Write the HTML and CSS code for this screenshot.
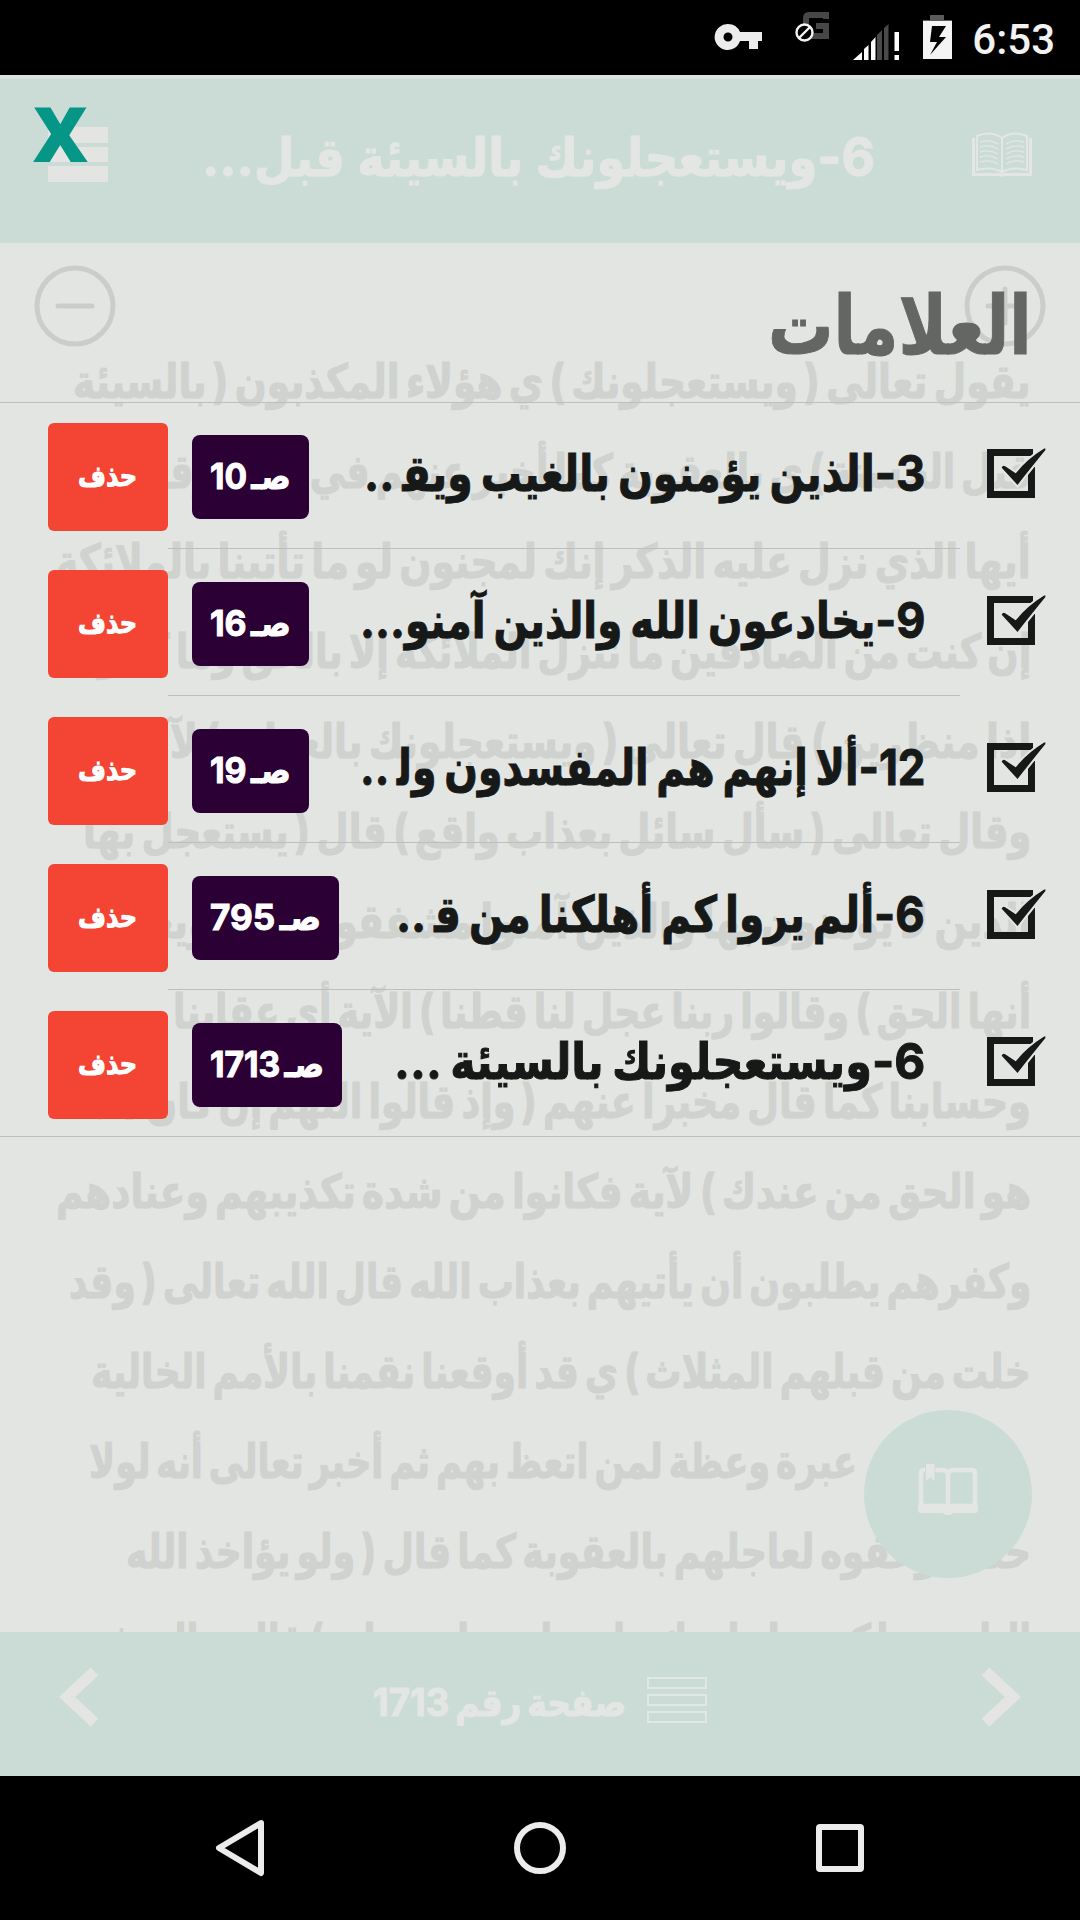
FILE: index.html
```html
<!DOCTYPE html>
<html lang="ar" dir="rtl">
<head>
<meta charset="utf-8">
<title>العلامات</title>
<link rel="stylesheet" href="styles.css">
</head>
<body>
<div class="screen">
  <div class="status" dir="ltr">
    <svg width="380" height="75" viewBox="700 0 380 75">
      <path fill="#ececec" fill-rule="evenodd" d="M728 24a13 13 0 1 0 12 17h9v8h9v-8h4v-9h-22a13 13 0 0 0-12-8zm0 8.500a4.500 4.500 0 1 1 0 9 4.500 4.500 0 0 1 0-9z"/>
      <path fill="none" stroke="#474747" stroke-width="6" d="M826 19v-4h-17q-3 0-3 3v15q0 3 3 3h17v-10h-10"/>
      <circle cx="804.500" cy="32.500" r="8" fill="#000" stroke="#f4f4f4" stroke-width="2.400"/>
      <path stroke="#f4f4f4" stroke-width="2.400" d="M799 38l11-11"/>
      <path fill="#fff" d="M853 60l9-8v8zM864 60V49l4.500-4v15zM871 60V42l4.500-5v23z"/>
      <path fill="#4a4a4a" d="M877 60V35l5-5v30zM884 60V28l4.500-4v36z"/>
      <path fill="#fff" d="M894.500 32h4.500v19h-4.500zM894.500 55h4.500v5h-4.500z"/>
      <path fill="#5a5a5a" d="M930 15h14v5h8v1h-29v-1h7z"/>
      <path fill="#f4f4f4" fill-rule="evenodd" d="M923 21h29v38h-29zM932 26l-2 16h7l-7 13 16-18h-7l7-11z"/>
    </svg>
    <span class="clock">6:53</span>
  </div>

  <main class="app">
    <section class="reader">
      <header class="bar top">
        <svg class="book" width="60" height="45" viewBox="0 0 60 45" fill="none" stroke="#e4e6e4">
          <path stroke-width="2" d="M5 4Q19-2 30 6Q41-2 55 4V38Q41 34 30 40Q19 34 5 38zM30 6v34"/>
          <path stroke-width="3" d="M1.500 6V42.500H28q2 1.500 4 0H58.500V6"/>
          <path stroke-width="1.400" d="M8 10q10-3 18 2M8 15q10-3 18 2M8 20q10-3 18 2M8 25q10-3 18 2M8 30q10-3 18 2M52 10q-10-3-18 2M52 15q-10-3-18 2M52 20q-10-3-18 2M52 25q-10-3-18 2M52 30q-10-3-18 2"/>
        </svg>
        <h1 class="chapter"><span class="fit" data-width="673">6-ويستعجلونك بالسيئة قبل...</span></h1>
        <div class="menu"><i></i><i></i><i></i></div>
      </header>
      <article class="page">
        <div class="sizes">
          <svg width="82" height="82" viewBox="0 0 82 82"><circle cx="41" cy="41" r="38"/><path d="M24 41h34M41 24v34"/></svg>
          <svg width="82" height="82" viewBox="0 0 82 82"><circle cx="41" cy="41" r="38"/><path d="M24 41h34"/></svg>
        </div>
        <p><span class="fit" data-width="958">يقول تعالى ( ويستعجلونك ) ي هؤلاء المكذبون ( بالسيئة</span></p>
        <p><span class="fit" data-width="956">قبل الحسنة ) ي بالعقوبة كما أخبر عنهم في قوله وقالوا يا</span></p>
        <p><span class="fit" data-width="975">أيها الذي نزل عليه الذكر إنك لمجنون لو ما تأتينا بالملائكة</span></p>
        <p><span class="fit" data-width="946">إن كنت من الصادقين ما ننزل الملائكة إلا بالحق وما كانوا</span></p>
        <p><span class="fit" data-width="940">إذا منظرين ) قال تعالى ( ويستعجلونك بالعذاب ) لآيتين</span></p>
        <p><span class="fit" data-width="948">وقال تعالى ( سأل سائل بعذاب واقع ) قال ( يستعجل بها</span></p>
        <p><span class="fit" data-width="975">الذين لا يؤمنون بها والذين آمنوا مشفقون منها ويعلمون</span></p>
        <p><span class="fit" data-width="858">أنها الحق ) وقالوا ربنا عجل لنا قطنا ) الآية أي عقابنا</span></p>
        <p><span class="fit" data-width="950">وحسابنا كما قال مخبرا عنهم ( وإذ قالوا اللهم إن كان هذا</span></p>
        <p><span class="fit" data-width="975">هو الحق من عندك ) لآية فكانوا من شدة تكذيبهم وعنادهم</span></p>
        <p><span class="fit" data-width="962">وكفرهم يطلبون أن يأتيهم بعذاب الله قال الله تعالى ( وقد</span></p>
        <p><span class="fit" data-width="940">خلت من قبلهم المثلاث ) ي قد أوقعنا نقمنا بالأمم الخالية</span></p>
        <p><span class="fit" data-width="160">وجعلناهم</span><span class="fit gap" data-width="768">عبرة وعظة لمن اتعظ بهم ثم أخبر تعالى أنه لولا</span></p>
        <p><span class="fit" data-width="905">حلمه وعفوه لعاجلهم بالعقوبة كما قال ( ولو يؤاخذ الله</span></p>
        <p><span class="fit" data-width="956">الناس بما كسبوا ما ترك على ظهرها من دابة ) قال تعالى في</span></p>
        <div class="fab">
          <svg width="60" height="52" viewBox="0 0 60 52" fill="none" stroke="#e4e6e4">
            <path stroke-width="4.500" d="M7 6H24Q30 6 30 11Q30 6 36 6H53Q57 6 57 9V42H3V9Q3 6 7 6zM30 11v31"/>
            <path fill="#e4e6e4" stroke="none" d="M0 41h60v5q0 3-3 3H35q-1 2-5 2t-5-2H3q-3 0-3-3z"/>
            <path fill="#e4e6e4" stroke="#cbdcd7" stroke-width="1" d="M7.500-.5h9.500V18l-4.700-4-4.800 4z"/>
          </svg>
        </div>
      </article>
      <footer class="bar bottom">
        <svg width="40" height="60" viewBox="0 0 40 60"><path class="chev" d="M4.500 4.500L32 30 4.500 55.500"/></svg>
        <div class="pageno">
          <svg width="60" height="46" viewBox="0 0 60 46" fill="none" stroke="#dfe8e4" stroke-width="2"><path d="M1 1h58v10H1zM1 18h58v10H1zM1 35h58v10H1z"/></svg>
          <span class="fit" data-width="253">صفحة رقم 1713</span>
        </div>
        <svg width="40" height="60" viewBox="0 0 40 60"><path class="chev" d="M35.500 4.500L8 30l27.500 25.500"/></svg>
      </footer>
    </section>

    <section class="panel">
      <div class="close">X</div>
      <h2><span class="fit" data-width="264">العلامات</span></h2>
      <ul class="marks">
        <li>
          <svg class="check" width="60" height="52" viewBox="0 0 60 52"><use href="#tick"/></svg>
          <div class="name"><span class="fit" data-width="561">3-الذين يؤمنون بالغيب ويق&zwj; ..</span></div>
          <div class="num w2"><span class="fit" data-width="81">صـ 10</span></div>
          <div class="del"><span class="fit" data-width="59">حذف</span></div>
        </li>
        <li>
          <svg class="check" width="60" height="52" viewBox="0 0 60 52"><use href="#tick"/></svg>
          <div class="name"><span class="fit" data-width="565">9-يخادعون الله والذين آمنو...</span></div>
          <div class="num w2"><span class="fit" data-width="81">صـ 16</span></div>
          <div class="del"><span class="fit" data-width="59">حذف</span></div>
        </li>
        <li>
          <svg class="check" width="60" height="52" viewBox="0 0 60 52"><use href="#tick"/></svg>
          <div class="name"><span class="fit" data-width="565">12-ألا إنهم هم المفسدون ول&zwj; ..</span></div>
          <div class="num w2"><span class="fit" data-width="81">صـ 19</span></div>
          <div class="del"><span class="fit" data-width="59">حذف</span></div>
        </li>
        <li>
          <svg class="check" width="60" height="52" viewBox="0 0 60 52"><use href="#tick"/></svg>
          <div class="name"><span class="fit" data-width="529">6-ألم يروا كم أهلكنا من ق&zwj; ..</span></div>
          <div class="num w3"><span class="fit" data-width="111">صـ 795</span></div>
          <div class="del"><span class="fit" data-width="59">حذف</span></div>
        </li>
        <li>
          <svg class="check" width="60" height="52" viewBox="0 0 60 52"><use href="#tick"/></svg>
          <div class="name"><span class="fit" data-width="531">6-ويستعجلونك بالسيئة ...</span></div>
          <div class="num w4"><span class="fit" data-width="114">صـ 1713</span></div>
          <div class="del"><span class="fit" data-width="59">حذف</span></div>
        </li>
      </ul>
    </section>
  </main>

  <nav class="keys" dir="ltr">
    <svg width="52" height="60" viewBox="0 0 52 60"><path d="M47 5L5 30l42 25z"/></svg>
    <svg width="52" height="60" viewBox="0 0 52 60"><circle cx="26" cy="30" r="23"/></svg>
    <svg width="52" height="60" viewBox="0 0 52 60"><rect x="5" y="9" width="42" height="42" rx="1"/></svg>
  </nav>
</div>
<svg class="defs" width="0" height="0">
  <g id="tick">
    <path fill="none" stroke="#171918" stroke-width="7" d="M46 5.500H3.500V47.500H44.500V20"/>
    <path fill="#171918" stroke="#e3e6e3" stroke-width="2" d="M13.500 21q1.500-5 6-2l9 6Q40 11 57 0.500q3.500-.5 2 3.500Q46 20 30.500 39.500z"/>
  </g>
</svg>
<script src="fit.js"></script>
</body>
</html>
```
FILE: styles.css
```css
* { box-sizing: border-box; margin: 0; padding: 0; }
body {
  width: 1080px;
  height: 1920px;
  overflow: hidden;
  background: #000;
  font-family: Inter, "DejaVu Sans Condensed", "DejaVu Sans", sans-serif;
  font-weight: 700;
}
svg { display: block; flex: none; }
.defs { position: absolute; }
.screen { display: flex; flex-direction: column; height: 1920px; overflow: hidden; }

.fit { display: inline-block; white-space: nowrap; text-align: right; vertical-align: top; }
.fit > span { display: inline-block; transform-origin: right center; -webkit-text-stroke: 1px currentColor; }

.status { height: 75px; position: relative; display: flex; justify-content: flex-end; background: #000; }
.clock {
  position: absolute;
  right: 25px;
  top: 15px;
  font: 500 42px/50px Roboto, sans-serif;
  color: #f2f2f2;
}

.app { position: relative; height: 1701px; overflow: hidden; background: #e2e5e2; }
.reader { display: flex; flex-direction: column; height: 100%; }
.bar { background: #cbdcd7; color: #e4e6e4; display: flex; flex: none; }
.top {
  height: 168px;
  border-top: 4px solid #d7e3df;
  padding: 0 48px;
  align-items: flex-start;
}
.book { margin-top: 53px; }
.chapter {
  margin: 42px 97px 0 auto;
  font-size: 53px;
  line-height: 72px;
  width: 673px;
  height: 84px;
}
.menu { display: flex; flex-direction: column; gap: 4px; width: 60px; margin: 48px auto 0 0; }
.menu i { height: 15.500px; background: #e4e4e2; }

.page {
  position: relative;
  height: 1389px;
  overflow: hidden;
  padding: 93px 49px 0;
  color: #cfd2cf;
  font-size: 47px;
  line-height: 90px;
  word-spacing: -4px;
}
.page p { height: 90px; white-space: nowrap; }
.gap { margin-right: 14px; }
.sizes {
  position: absolute;
  left: 34px;
  right: 34px;
  top: 22px;
  display: flex;
  justify-content: space-between;
  fill: none;
  stroke: #cbcdcb;
  stroke-width: 5;
  stroke-linecap: round;
}
.fab {
  position: absolute;
  left: 864px;
  top: 1167px;
  width: 168px;
  height: 168px;
  border-radius: 50%;
  background: #cbdcd7;
  padding: 54px;
}

.bottom { height: 144px; padding: 35px 59px 0; justify-content: space-between; }
.chev { fill: none; stroke: #e4e5e3; stroke-width: 11; }
.pageno { display: flex; gap: 20px; font-size: 38px; line-height: 60px; word-spacing: -3px; }
.pageno svg { margin-top: 10px; }
.pageno .fit { margin-top: 5px; }

.panel { position: absolute; inset: 0; }
.close {
  position: absolute;
  left: 31px;
  top: 31px;
  width: 59px;
  font: 800 76px/54px "Open Sans", sans-serif;
  text-align: center;
  color: #059687;
  direction: ltr;
}
.panel h2 {
  height: 328px;
  padding: 200px 48px 0;
  font-size: 81px;
  line-height: 100px;
  color: #646664;
  border-bottom: 1px solid #bdbfbd;
}
.marks { list-style: none; margin-top: -1px; }
.marks li {
  display: flex;
  height: 147px;
  padding: 21px 33px 0 48px;
  background: linear-gradient(#bdbfbd, #bdbfbd) 168px 100% / 792px 1px no-repeat;
}
.marks li:last-child { background-size: 1080px 1px; background-position: 0 100%; }
.check { margin-top: 24px; }
.name {
  margin-right: 62px;
  margin-top: 15px;
  font-size: 50px;
  line-height: 70px;
  word-spacing: -3px;
  color: #171918;
}
.num, .del { color: #fff; display: flex; justify-content: center; flex: none; }
.num {
  height: 84px;
  margin: 12px auto 0 24px;
  border-radius: 8px;
  background: #2b0034;
  font-size: 36px;
  line-height: 82px;
  word-spacing: -4px;
}
.w2 { width: 117px; }
.w3 { width: 147px; }
.w4 { width: 150px; }
.del {
  width: 120px;
  height: 108px;
  border-radius: 6px;
  background: #f44434;
  font-size: 29px;
  line-height: 105px;
}

.keys {
  height: 144px;
  display: flex;
  justify-content: space-between;
  padding: 42px 214px 0;
  background: #000;
  fill: none;
  stroke: #ececec;
  stroke-width: 6;
  stroke-linejoin: round;
}
```
FILE: fit.js
```js
document.querySelectorAll(".fit").forEach(function (box) {
  var line = document.createElement("span");
  line.textContent = box.textContent;
  box.textContent = "";
  box.appendChild(line);
  var width = Number(box.dataset.width);
  var natural = line.offsetWidth;
  box.style.width = width + "px";
  line.style.transform = "scaleX(" + width / natural + ")";
});
```
